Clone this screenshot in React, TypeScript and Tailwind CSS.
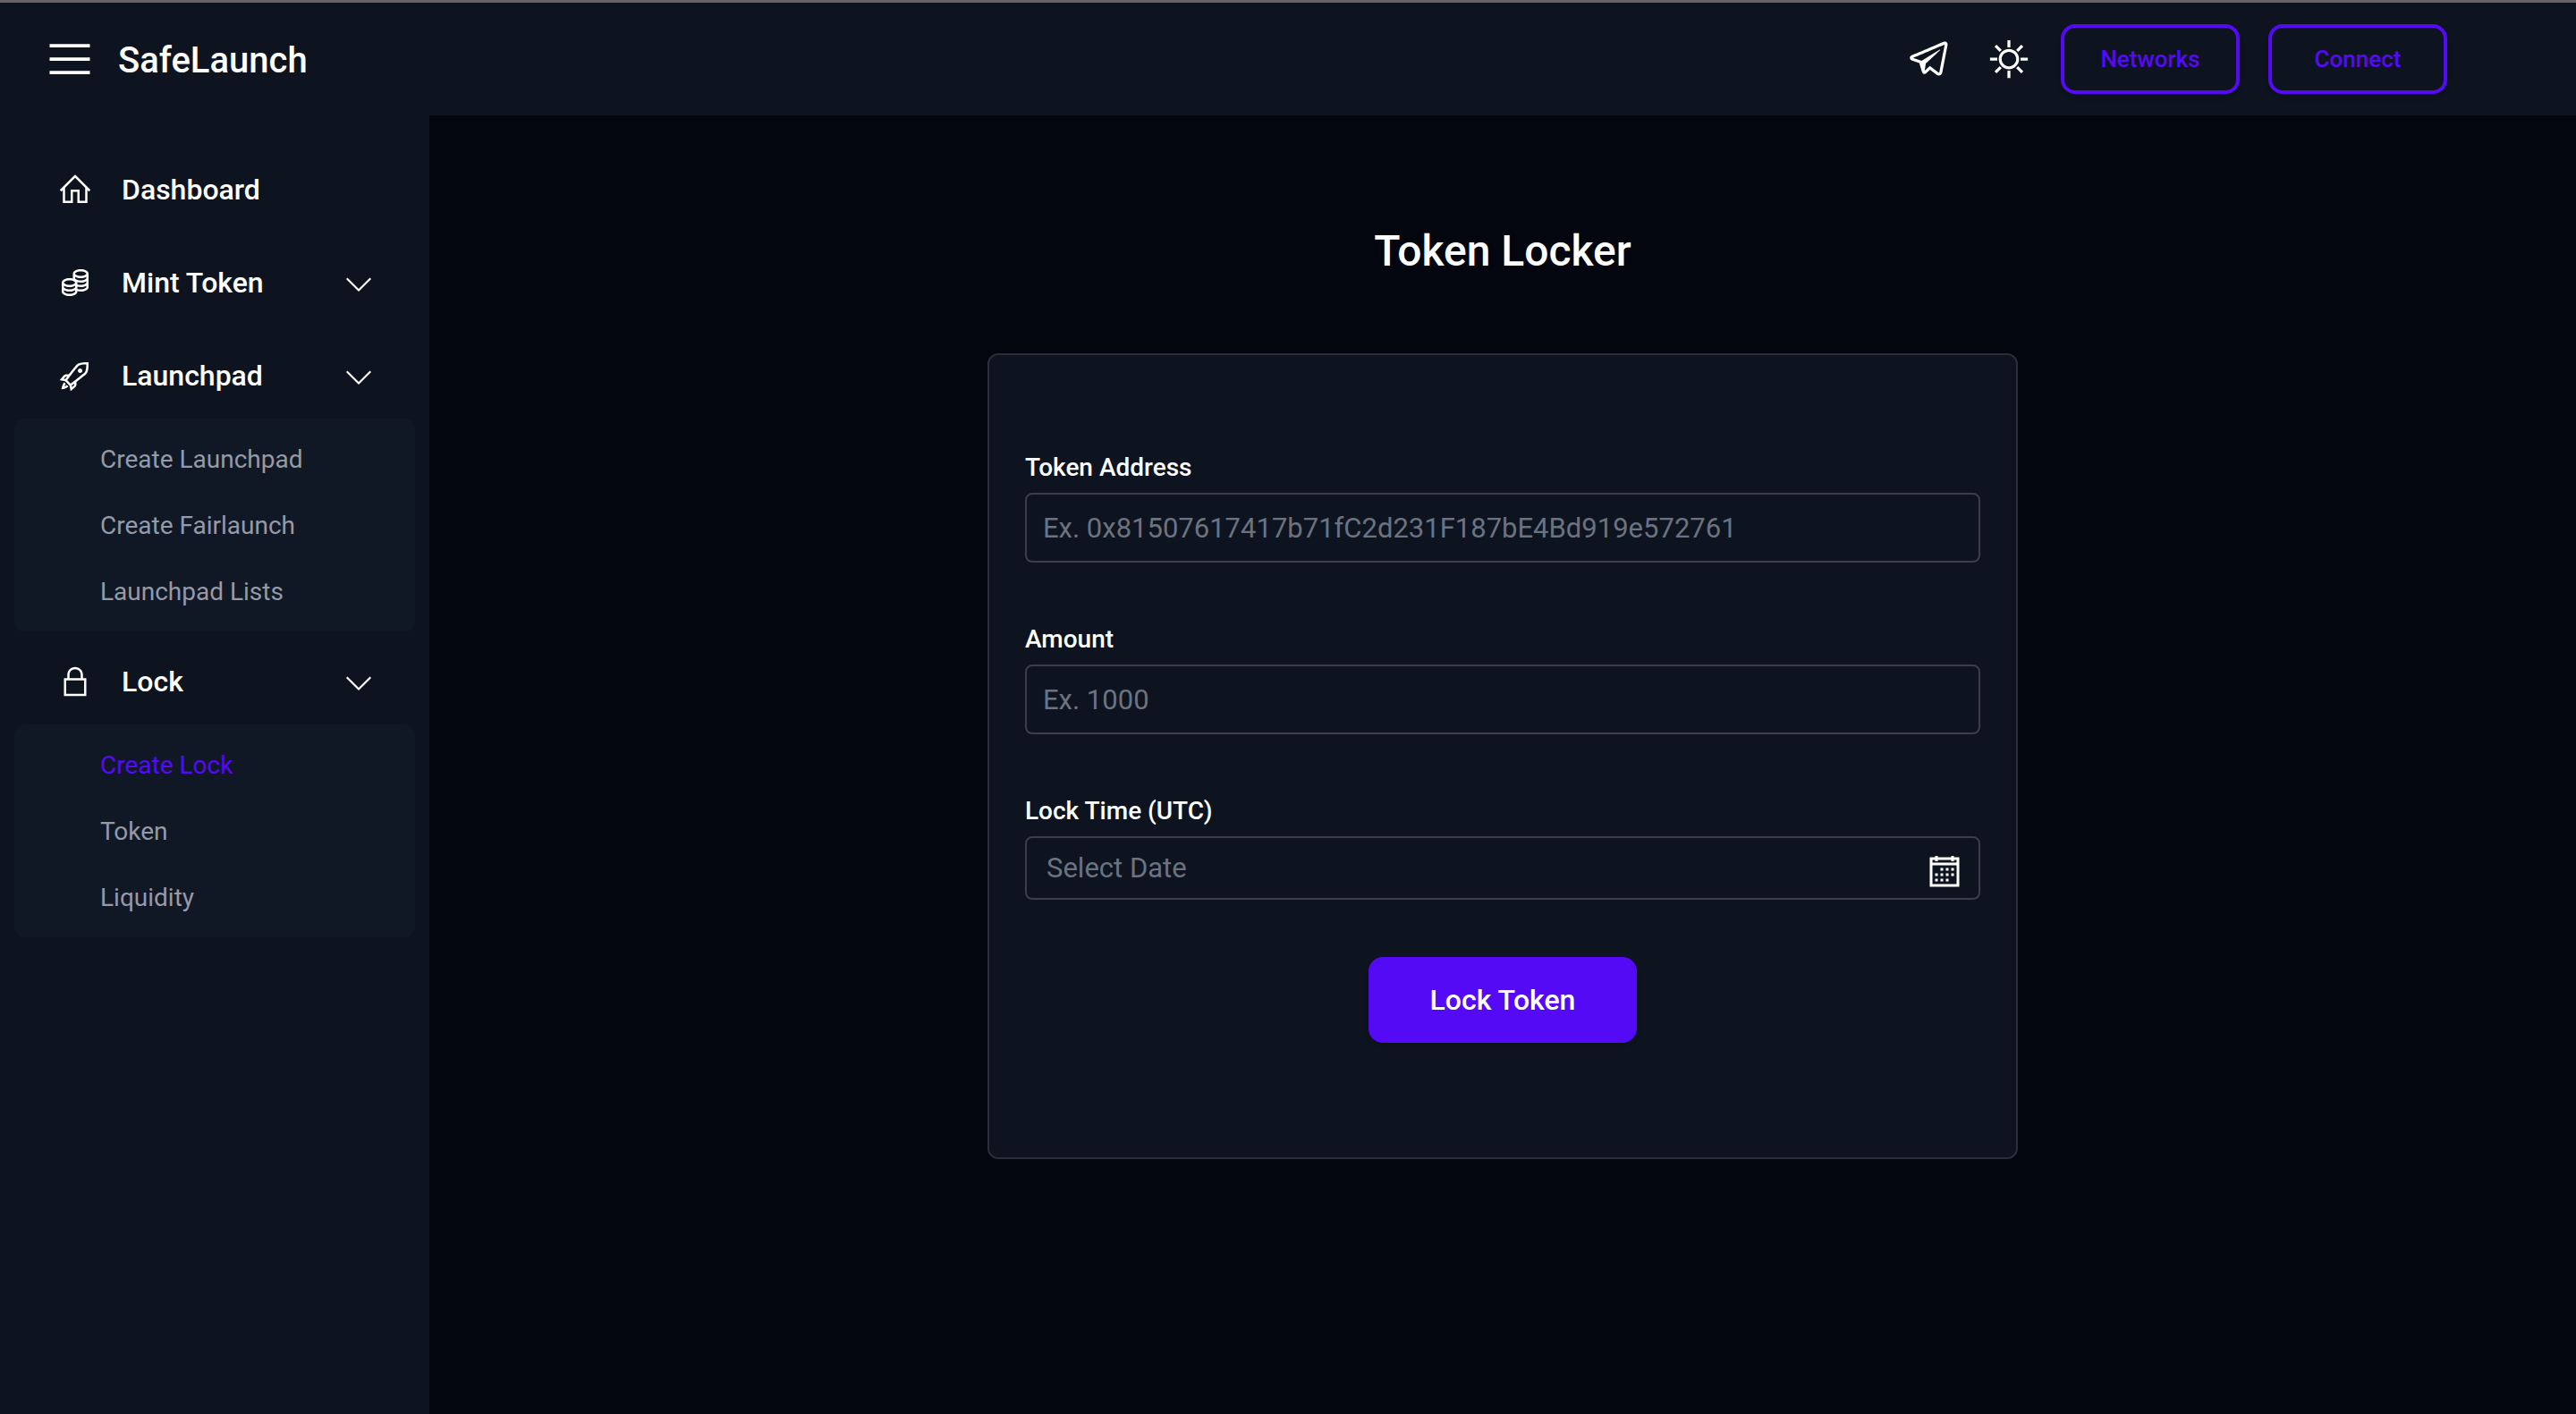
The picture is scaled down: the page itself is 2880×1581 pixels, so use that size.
import type { ReactNode } from "react";
import {
  LiaAngleDownSolid,
  LiaBarsSolid,
  LiaCalendarSolid,
  LiaCoinsSolid,
  LiaHomeSolid,
  LiaLockSolid,
  LiaRocketSolid,
  LiaSunSolid,
  LiaTelegramPlane,
} from "react-icons/lia";

function HeaderButton({ children }: { children: ReactNode }) {
  return (
    <button
      type="button"
      className="h-[78px] w-[200px] rounded-2xl border-4 border-[#550af5] text-[26px] font-medium text-[#550af5] shadow-md"
    >
      {children}
    </button>
  );
}

function Header() {
  return (
    <header className="flex h-[129px] items-center justify-between border-t-3 border-[#646368] bg-[#0e141f] pr-36 pl-12">
      <div className="flex items-center gap-6">
        <button type="button" aria-label="Toggle menu">
          <LiaBarsSolid size={60} />
        </button>
        <a href="#" className="pt-1 text-[40px] font-medium">
          SafeLaunch
        </a>
      </div>
      <div className="flex items-center gap-8">
        <div className="flex items-center gap-9">
          <a href="#" aria-label="Telegram">
            <LiaTelegramPlane size={52} />
          </a>
          <button type="button" aria-label="Toggle theme">
            <LiaSunSolid size={52} />
          </button>
        </div>
        <HeaderButton>Networks</HeaderButton>
        <HeaderButton>Connect</HeaderButton>
      </div>
    </header>
  );
}

function NavRow({ icon, label, expandable }: { icon: ReactNode; label: string; expandable?: boolean }) {
  const rowClass = "mb-2 flex h-24 w-full items-center gap-8 pr-[46px] pl-12 text-[32px] font-medium";
  if (!expandable) {
    return (
      <a href="#" className={rowClass}>
        {icon}
        {label}
      </a>
    );
  }
  return (
    <button type="button" className={rowClass}>
      {icon}
      {label}
      <LiaAngleDownSolid size={34} className="ml-auto" />
    </button>
  );
}

function SubMenu({ items, active }: { items: string[]; active?: string }) {
  return (
    <ul className="-mt-2 mb-2 rounded-xl bg-[#111825] py-2 pl-24 text-[28px]">
      {items.map((item) => (
        <li key={item}>
          <a
            href="#"
            className={
              item === active
                ? "flex h-[74px] items-center pt-0.5 text-[#550af5]"
                : "flex h-[74px] items-center pt-0.5 text-[#949aa8]"
            }
          >
            {item}
          </a>
        </li>
      ))}
    </ul>
  );
}

function Sidebar() {
  return (
    <nav className="w-[480px] shrink-0 bg-[#0e141f] px-4 pt-[35px]">
      <NavRow icon={<LiaHomeSolid size={40} />} label="Dashboard" />
      <NavRow icon={<LiaCoinsSolid size={40} />} label="Mint Token" expandable />
      <NavRow icon={<LiaRocketSolid size={40} />} label="Launchpad" expandable />
      <SubMenu items={["Create Launchpad", "Create Fairlaunch", "Launchpad Lists"]} />
      <NavRow icon={<LiaLockSolid size={40} />} label="Lock" expandable />
      <SubMenu items={["Create Lock", "Token", "Liquidity"]} active="Create Lock" />
    </nav>
  );
}

const labelClass = "pt-0.5 text-[28px] leading-10 font-medium";
const inputClass =
  "w-full rounded-lg border-2 border-[#3b3e48] bg-transparent text-[31px] placeholder:text-[#6b7280]";

function Field({ id, label, placeholder }: { id: string; label: string; placeholder: string }) {
  return (
    <div className="mb-16 flex flex-col gap-2">
      <label htmlFor={id} className={labelClass}>
        {label}
      </label>
      <input id={id} type="text" placeholder={placeholder} className={`${inputClass} h-[78px] px-4.5`} />
    </div>
  );
}

function LockForm() {
  return (
    <form className="flex w-full max-w-6xl flex-col rounded-xl border-2 border-[#2b2e38] bg-[#0e141f] px-10 pt-[104px] pb-32">
      <Field id="address" label="Token Address" placeholder="Ex. 0x81507617417b71fC2d231F187bE4Bd919e572761" />
      <Field id="amount" label="Amount" placeholder="Ex. 1000" />
      <div className="flex flex-col gap-2">
        <label htmlFor="lock-time" className={labelClass}>
          Lock Time (UTC)
        </label>
        <div className="relative">
          <input id="lock-time" type="text" placeholder="Select Date" className={`${inputClass} h-[71px] pr-20 pl-5.5`} />
          <button type="button" aria-label="Open calendar" className="absolute top-4 right-4">
            <LiaCalendarSolid size={48} />
          </button>
        </div>
      </div>
      <button
        type="submit"
        className="mt-16 h-24 w-[300px] self-center rounded-2xl bg-[#550af5] text-[32px] font-medium shadow-md"
      >
        Lock Token
      </button>
    </form>
  );
}

export default function App() {
  return (
    <div className="flex min-h-screen flex-col bg-[#03060e] font-[Roboto,sans-serif] text-white">
      <Header />
      <div className="flex grow">
        <Sidebar />
        <main className="flex grow flex-col items-center gap-[78px] px-8 pt-[116px]">
          <h1 className="text-[48px] leading-[72px] font-medium">Token Locker</h1>
          <LockForm />
        </main>
      </div>
    </div>
  );
}
